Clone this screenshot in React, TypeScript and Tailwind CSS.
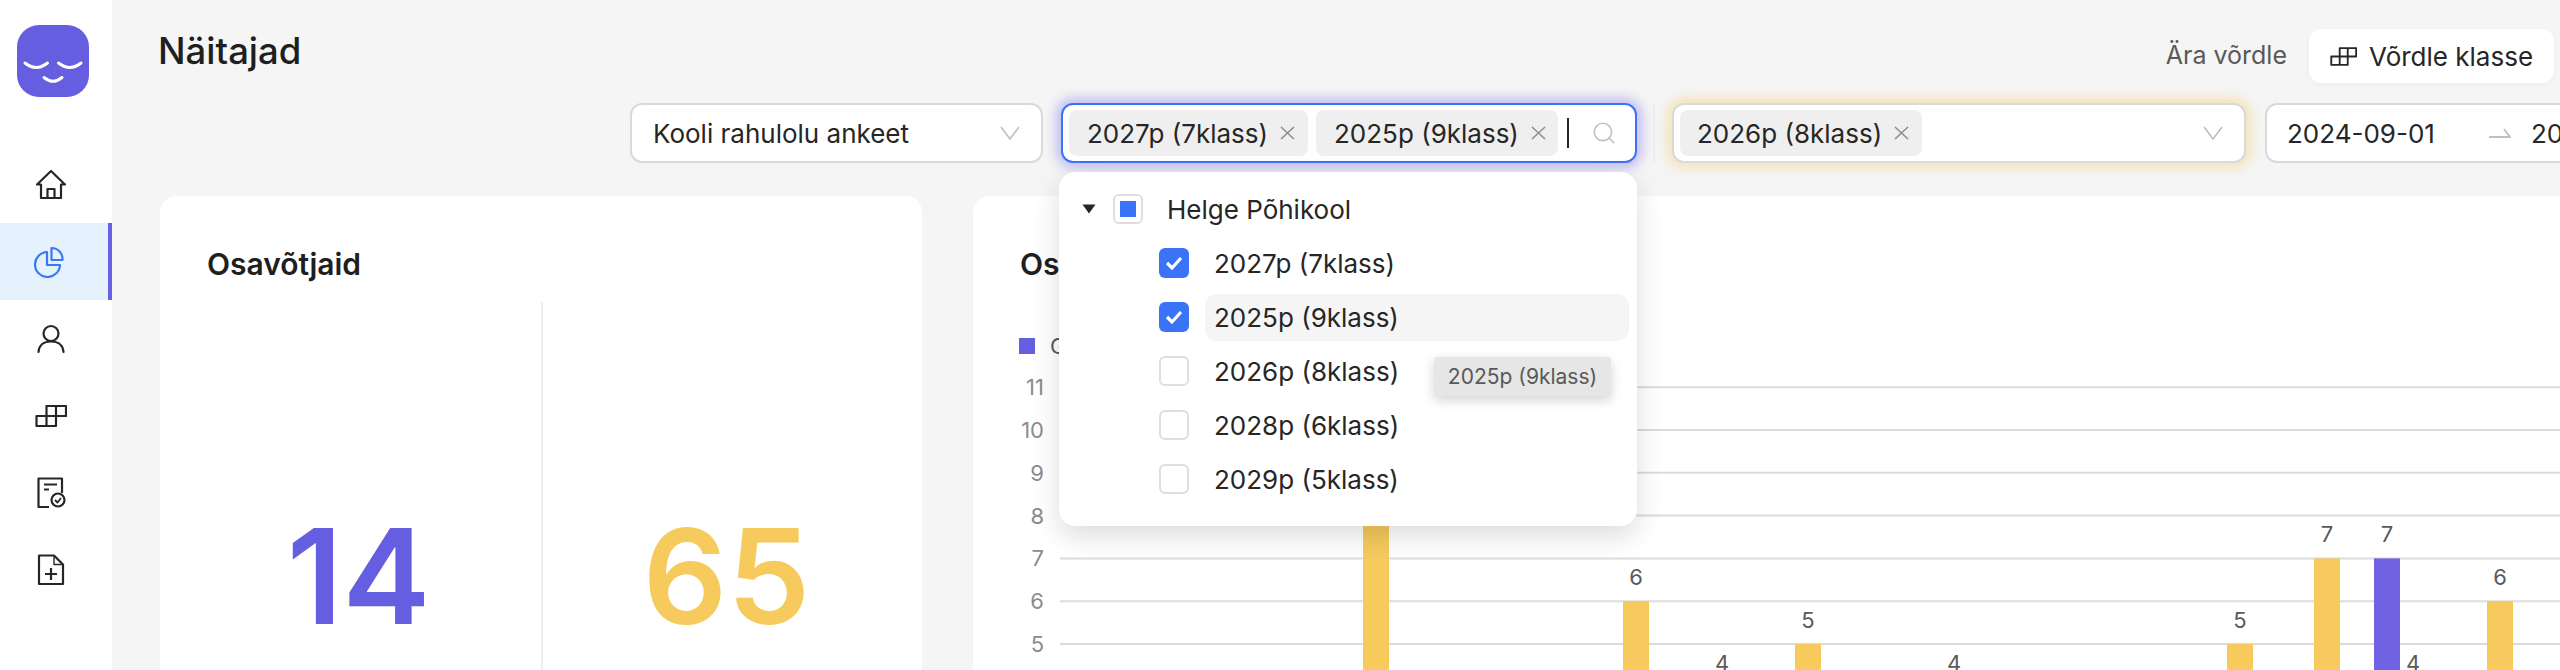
import { Search } from 'lucide-react';

function Logo() {
  return (
    <svg width="72" height="72" viewBox="0 0 72 72" fill="none">
      <rect width="72" height="72" rx="22" fill="#665ee0" />
      <path d="M8 38 Q19 47 30.5 38 M41.5 38 Q53 47 64 38 M27 52.5 Q36 60 45 52.5" stroke="#fff" strokeWidth="3" strokeLinecap="round" />
    </svg>
  );
}

function HomeIcon() {
  return (
    <svg width="32" height="32" viewBox="0 0 32 32" fill="none" stroke="#262626" strokeWidth="2.2" strokeLinejoin="round">
      <path d="M16 2 L2 15.5 H6 V29 H26 V15.5 H30 Z" />
      <path d="M12.5 29 V20 H19.5 V29" />
    </svg>
  );
}

function PieIcon() {
  return (
    <svg width="32" height="32" viewBox="0 0 32 32" fill="none" stroke="#3b78f6" strokeWidth="2.2" strokeLinejoin="round">
      <path d="M14 6 A12.5 12.5 0 1 0 27 19 H14 Z" />
      <path d="M18.5 2 A11 11 0 0 1 29.5 14 H18.5 Z" />
    </svg>
  );
}

function UserIcon() {
  return (
    <svg width="32" height="32" viewBox="0 0 32 32" fill="none" stroke="#262626" strokeWidth="2.2" strokeLinecap="round">
      <circle cx="16" cy="10.5" r="7.5" />
      <path d="M3.5 29 C4 22 9 18.5 16 18.5 C23 18.5 28 22 28.500 29" />
    </svg>
  );
}

function BlocksIcon({ size = 32 }: { size?: number }) {
  return (
    <svg width={size} height={size} viewBox="0 0 32 32" fill="none" stroke="#262626" strokeWidth="2.2" strokeLinejoin="round">
      <path d="M11.500 6 H31 V16 H21 V26 H1.500 V16 H11.500 Z" />
      <path d="M11.500 16 H21 V6 M11.500 16 V26" />
    </svg>
  );
}

function DocCheckIcon() {
  return (
    <svg width="32" height="32" viewBox="0 0 32 32" fill="none" stroke="#262626" strokeWidth="2.2" strokeLinejoin="round">
      <path d="M14 30 H3.500 V1.500 H27 V16" />
      <path d="M9 7.500 H22 M9 12.500 H14" />
      <circle cx="23" cy="23" r="6.500" fill="#fff" />
      <path d="M20 23 L22.500 25.500 L26 21" strokeWidth="1.800" />
    </svg>
  );
}

function FilePlusIcon() {
  return (
    <svg width="32" height="32" viewBox="0 0 32 32" fill="none" stroke="#262626" strokeWidth="2.2" strokeLinejoin="round">
      <path d="M4 1.500 H19 L28 10.500 V30 H4 Z" />
      <path d="M19 1.500 V10.500 H28" strokeWidth="1.400" />
      <path d="M10 20 H22 M16 14 V26" />
    </svg>
  );
}

function Chevron() {
  return (
    <svg width="20" height="14" viewBox="0 0 20 14" fill="none" stroke="#bfbfbf" strokeWidth="1.600">
      <path d="M1 1 L10 13 L19 1" />
    </svg>
  );
}

function Chip({ label, className }: { label: string; className: string }) {
  return (
    <div className={`flex h-[46px] shrink-0 items-center rounded-lg bg-[#efefef] text-[26px] text-[#262626] ${className}`}>
      <span>{label}</span>
      <svg className="ml-3 shrink-0" width="15" height="14" viewBox="0 0 15 14" fill="none" stroke="#8c8c8c" strokeWidth="1.500">
        <path d="M1 1 L14 13 M14 1 L1 13" />
      </svg>
    </div>
  );
}

function NavItem({ children, active }: { children: React.ReactNode; active?: boolean }) {
  return (
    <div className={`flex h-[77px] items-center justify-center pr-[10px] ${active ? 'border-r-4 border-[#6a5fe3] bg-[#e6f1fe] pr-[6px]' : ''}`}>
      {children}
    </div>
  );
}

function CheckedBox() {
  return (
    <div className="flex h-[30px] w-[30px] shrink-0 items-center justify-center rounded-md bg-[#3b73f6]">
      <svg width="20" height="16" viewBox="0 0 20 16" fill="none" stroke="#fff" strokeWidth="3.200">
        <path d="M3 8 L8 13 L17 3" />
      </svg>
    </div>
  );
}

function EmptyBox() {
  return <div className="h-[30px] w-[30px] shrink-0 rounded-md border-2 border-[#dedede] bg-white" />;
}

const rows = [
  { label: '2027p (7klass)', checked: true },
  { label: '2025p (9klass)', checked: true, hover: true },
  { label: '2026p (8klass)' },
  { label: '2028p (6klass)' },
  { label: '2029p (5klass)' },
];

function TreeDropdown() {
  return (
    <div className="absolute left-[947px] top-[172px] z-10 h-[354px] w-[578px] rounded-2xl bg-white pt-[10px] shadow-[0_10px_28px_rgba(0,0,0,0.14)]">
      <div className="flex h-[54px] items-center pl-[22px]">
        <svg width="16" height="10" viewBox="0 0 16 10" fill="#262626">
          <path d="M1.500 0.500 H14.500 L8 9.500 Z" />
        </svg>
        <div className="ml-4 flex h-[30px] w-[30px] items-center justify-center rounded-md border-2 border-[#dedede]">
          <div className="h-4 w-4 bg-[#3b73f6]" />
        </div>
        <span className="ml-6 text-[26px] text-[#262626]">Helge Põhikool</span>
      </div>
      {rows.map((row) => (
        <div key={row.label} className="flex h-[54px] items-center pl-[100px] pr-2">
          {row.checked ? <CheckedBox /> : <EmptyBox />}
          <div className={`ml-4 flex h-[47px] flex-1 items-center rounded-xl pl-[9px] text-[26px] text-[#262626] ${row.hover ? 'bg-[#f5f5f5]' : ''}`}>
            {row.label}
          </div>
        </div>
      ))}
      <div className="absolute left-[375px] top-[185px] flex h-[39px] w-[177px] items-center justify-center rounded-[3px] bg-[#e6e6e6] text-[21px] text-[#595959] shadow-[0_4px_12px_rgba(0,0,0,0.18)]">
        2025p (9klass)
      </div>
    </div>
  );
}

const gridValues = [11, 10, 9, 8, 7, 6, 5];

// x is the bar's left edge in page pixels, the chart starts at page x 1000
const bars = [
  { x: 1363, value: 8, color: '#f6ca5d' },
  { x: 1623, value: 6, color: '#f6ca5d' },
  { x: 1795, value: 5, color: '#f6ca5d' },
  { x: 2227, value: 5, color: '#f6ca5d' },
  { x: 2314, value: 7, color: '#f6ca5d' },
  { x: 2374, value: 7, color: '#6f63e3' },
  { x: 2487, value: 6, color: '#f6ca5d' },
];

const floating = [1722, 1954, 2413];

function Chart() {
  const yOf = (v: number) => 645 - 370 + (5 - v) * 42.8;
  const xOf = (x: number) => x - 1000;
  return (
    <svg className="mt-[15px] block shrink-0" width="1600" height="330" viewBox="0 0 1600 330">
      {gridValues.map((v) => (
        <g key={v}>
          <line x1="60" x2="1600" y1={yOf(v)} y2={yOf(v)} stroke="#dcdcdc" strokeWidth="2" />
          <text x="44" y={yOf(v) + 8} textAnchor="end" fontSize="22" fill="#8c8c8c">{v}</text>
        </g>
      ))}
      <line x1="60" x2="1600" y1={yOf(4)} y2={yOf(4)} stroke="#dcdcdc" strokeWidth="2" />
      {bars.map((b) => (
        <g key={b.x}>
          <rect x={xOf(b.x)} y={yOf(b.value)} width="26" height={330 - yOf(b.value)} fill={b.color} />
          <text x={xOf(b.x) + 13} y={yOf(b.value) - 16} textAnchor="middle" fontSize="22" fill="#595959">{b.value}</text>
        </g>
      ))}
      {floating.map((x) => (
        <text key={x} x={xOf(x)} y={yOf(4) - 16} textAnchor="middle" fontSize="22" fill="#595959">4</text>
      ))}
    </svg>
  );
}

export default function App() {
  return (
    <div className="flex h-[670px] w-[2560px] overflow-hidden bg-[#f5f5f5] font-['Inter',sans-serif]">
      <aside className="h-full w-[112px] shrink-0 bg-white">
        <div className="ml-[17px] mt-[25px]">
          <Logo />
        </div>
        <nav className="mt-[49px]">
          <NavItem><HomeIcon /></NavItem>
          <NavItem active><PieIcon /></NavItem>
          <NavItem><UserIcon /></NavItem>
          <NavItem><BlocksIcon /></NavItem>
          <NavItem><DocCheckIcon /></NavItem>
          <NavItem><FilePlusIcon /></NavItem>
        </nav>
      </aside>

      <main className="relative w-[2448px] shrink-0">
        <div className="flex h-[54px] items-center justify-between mt-[29px] pl-[46px] pr-[6px]">
          <h1 className="text-[36.5px] font-medium leading-none text-[#1f1f1f] -mt-[10px]">Näitajad</h1>
          <div className="flex items-center gap-[22px]">
            <span className="text-[25px] text-[#595959]">Ära võrdle</span>
            <button className="flex h-[54px] w-[245px] items-center justify-center gap-3 rounded-xl bg-white text-[26px] text-[#262626] shadow-[0_2px_6px_rgba(0,0,0,0.04)]">
              <BlocksIcon size={27} />
              Võrdle klasse
            </button>
          </div>
        </div>

        <div className="ml-[518px] mt-5 flex h-[60px] w-[2000px] items-stretch">
          <div className="flex w-[413px] shrink-0 items-center justify-between rounded-xl border-2 border-[#d9d9d9] bg-white pl-[21px] pr-[21px] text-[26px] text-[#262626]">
            Kooli rahulolu ankeet
            <Chevron />
          </div>
          <div className="ml-[18px] flex w-[576px] shrink-0 items-center rounded-xl border-2 border-[#3b73f6] bg-white pl-[6px] shadow-[0_0_12px_5px_rgba(80,70,230,0.32)]">
            <Chip label="2027p (7klass)" className="w-[239px] pl-[18px]" />
            <Chip label="2025p (9klass)" className="ml-2 w-[242px] pl-[18px]" />
            <div className="ml-[9px] h-[30px] w-[2px] bg-[#262626]" />
            <Search className="ml-[22px] h-[26px] w-[26px] text-[#c4c4c4]" strokeWidth={1.6} />
          </div>
          <div className="ml-4 w-[2px] shrink-0 bg-[#ececec]" />
          <div className="ml-[17px] flex w-[574px] shrink-0 items-center justify-between rounded-xl border-2 border-[#d9d9d9] bg-white pl-[6px] pr-[21px] shadow-[0_0_12px_5px_rgba(246,200,95,0.4)]">
            <Chip label="2026p (8klass)" className="w-[242px] pl-[17px]" />
            <Chevron />
          </div>
          <div className="ml-[19px] flex w-[400px] shrink-0 items-center whitespace-nowrap rounded-xl border-2 border-[#d9d9d9] bg-white pl-[20px] text-[26px] text-[#262626]">
            <span>2024-09-01</span>
            <svg className="ml-[54px] shrink-0" width="22" height="10" viewBox="0 0 22 10" fill="none" stroke="#bfbfbf" strokeWidth="1.800">
              <path d="M0 9 H21 L15 1" />
            </svg>
            <span className="ml-[20px]">2025-06-30</span>
          </div>
        </div>

        <div className="mt-[33px] flex h-[600px] gap-[51px] pl-[48px]">
          <section className="w-[762px] shrink-0 rounded-2xl bg-white pt-[50px]">
            <h2 className="pl-[47px] text-[30px] font-semibold leading-9 text-[#1f1f1f]">Osavõtjaid</h2>
            <div className="mt-[20px] flex h-[480px]">
              <div className="flex w-[381px] justify-center pl-4 pt-[208px] text-[132px] font-semibold leading-[132px] text-[#665ee0]">14</div>
              <div className="flex w-[381px] justify-center border-l-2 border-[#eeeeee] pr-3 pt-[208px] text-[132px] font-semibold leading-[132px] text-[#f6ca5d]">65</div>
            </div>
          </section>
          <section className="w-[1600px] shrink-0 rounded-2xl bg-white pl-[27px] pt-[50px]">
            <h2 className="pl-5 text-[30px] font-semibold leading-9 text-[#1f1f1f]">Osavõtjaid</h2>
            <div className="ml-[19px] mt-[56px] flex items-center">
              <div className="h-4 w-4 bg-[#665ee0]" />
              <span className="ml-[15px] text-[22px] leading-4 text-[#595959]">Grupp</span>
            </div>
            <Chart />
          </section>
        </div>

        <TreeDropdown />
      </main>
    </div>
  );
}
